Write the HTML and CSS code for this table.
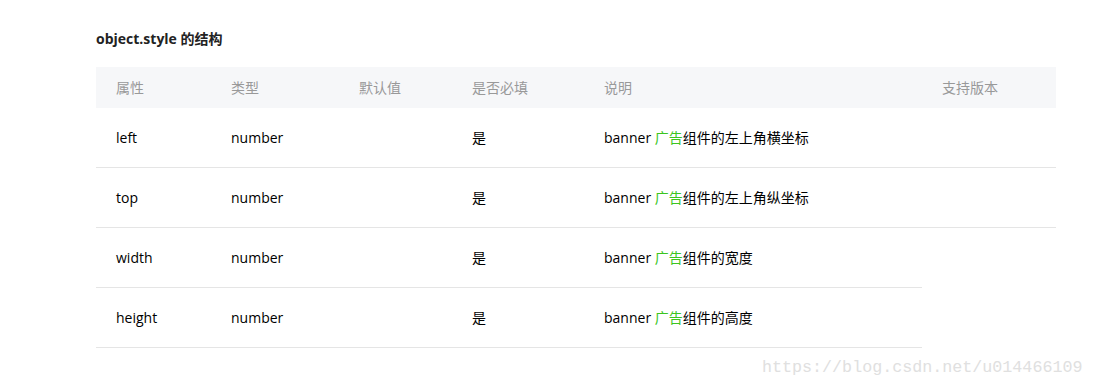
FILE: index.html
```html
<!DOCTYPE html>
<html>
<head>
<meta charset="utf-8">
<link rel="stylesheet" href="styles.css">
</head>
<body>
<div class="page">
  <h3 class="title">object.style 的结构</h3>
  <table class="tbl">
    <colgroup>
      <col class="c1"><col class="c2"><col class="c3"><col class="c4"><col class="c5"><col class="c6">
    </colgroup>
    <thead>
      <tr><th>属性</th><th>类型</th><th>默认值</th><th>是否必填</th><th>说明</th><th>支持版本</th></tr>
    </thead>
    <tbody>
      <tr><td>left</td><td>number</td><td></td><td>是</td><td>banner <span class="g">广告</span>组件的左上角横坐标</td><td></td></tr>
      <tr><td>top</td><td>number</td><td></td><td>是</td><td>banner <span class="g">广告</span>组件的左上角纵坐标</td><td></td></tr>
      <tr><td>width</td><td>number</td><td></td><td>是</td><td>banner <span class="g">广告</span>组件的宽度</td><td class="nob"></td></tr>
      <tr><td>height</td><td>number</td><td></td><td>是</td><td>banner <span class="g">广告</span>组件的高度</td><td class="nob"></td></tr>
    </tbody>
  </table>
</div>
<div class="wm">https://blog.csdn.net/u014466109</div>
</body>
</html>
```
FILE: styles.css
```css
html, body {
  margin: 0;
  padding: 0;
  background: #fff;
}
body {
  font-family: "Open Sans", "Noto Sans CJK SC", sans-serif;
  font-size: 14px;
  color: #000;
  width: 1094px;
  height: 388px;
  overflow: hidden;
  position: relative;
}
.page {
  padding: 29px 38px 0 96px;
}
.title {
  margin: 0 0 18px 0;
  font-size: 14px;
  font-weight: bold;
  color: #222;
  line-height: 20px;
}
.tbl {
  border-collapse: collapse;
  width: 960px;
  table-layout: fixed;
}
.c1 { width: 115px; }
.c2 { width: 128px; }
.c3 { width: 113px; }
.c4 { width: 132px; }
.c5 { width: 338px; }
.c6 { width: 134px; }
.tbl th {
  background: #f6f7f9;
  color: #999;
  font-weight: normal;
  text-align: left;
  height: 41px;
  padding: 0 0 0 20px;
  line-height: 20px;
}
.tbl td {
  height: 59px;
  padding: 0 0 0 20px;
  border-bottom: 1px solid #e5e5e5;
  line-height: 20px;
  vertical-align: middle;
}
.tbl td.nob {
  border-bottom: none;
}
.g {
  color: #3cc51f;
}
.wm {
  position: absolute;
  left: 762px;
  top: 357px;
  font-family: "Liberation Mono", monospace;
  font-size: 16.7px;
  color: #e0e0e0;
  line-height: 22px;
}
```
